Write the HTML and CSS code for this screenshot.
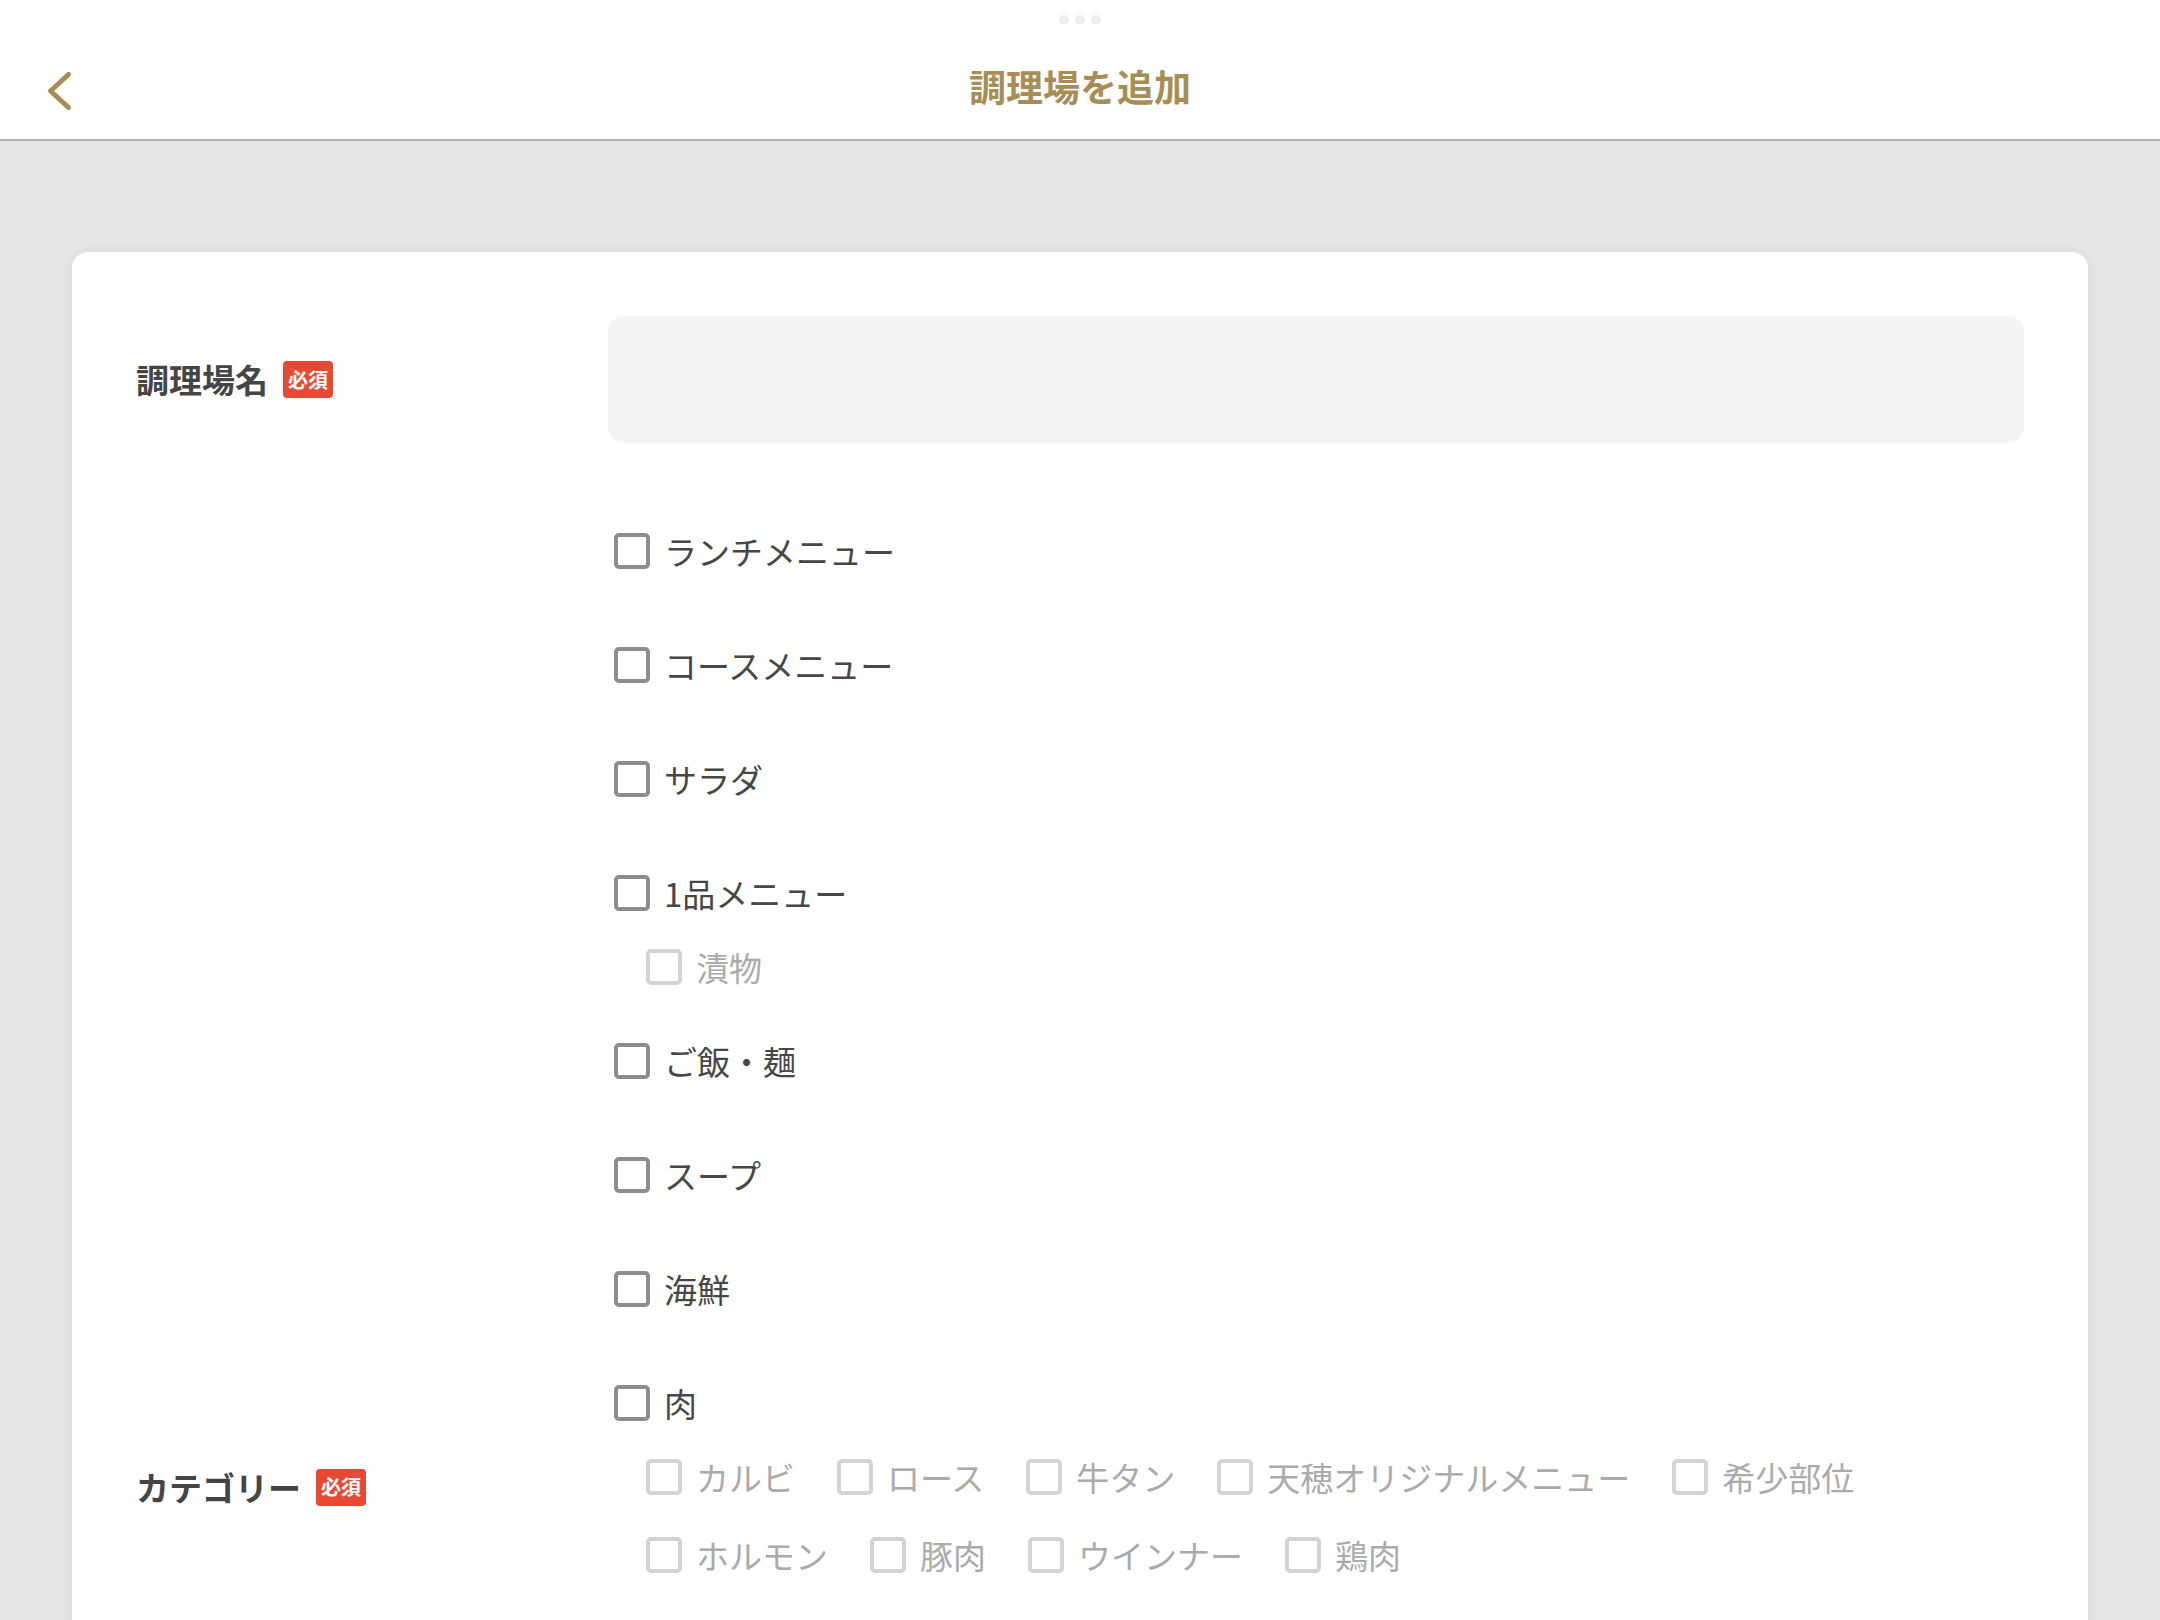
FILE: index.html
```html
<!DOCTYPE html>
<html lang="ja">
<head>
<meta charset="utf-8">
<title>調理場を追加</title>
<link rel="stylesheet" href="styles.css">
</head>
<body>
<div class="app">
  <header class="topbar">
    <div class="handle"><span></span><span></span><span></span></div>
    <div class="navbar">
      <button class="back" aria-label="戻る">
        <svg width="28" height="50" viewBox="0 0 28 50"><polyline points="22.5,11.5 4.5,28 22.5,44.5" fill="none" stroke="currentColor" stroke-width="5" stroke-linecap="round" stroke-linejoin="round"/></svg>
      </button>
      <h1 class="title">調理場を追加</h1>
      <div class="nav-spacer"></div>
    </div>
  </header>
  <main class="content">
    <section class="card">
      <div class="form-row">
        <div class="label"><span class="label-text">調理場名</span><span class="badge">必須</span></div>
        <div class="field"><input class="text-input" type="text"></div>
      </div>
      <div class="form-row category-row">
        <div class="label"><span class="label-text">カテゴリー</span><span class="badge">必須</span></div>
        <ul class="category-list">
          <li class="item"><label class="check"><input type="checkbox"><span>ランチメニュー</span></label></li>
          <li class="item"><label class="check"><input type="checkbox"><span>コースメニュー</span></label></li>
          <li class="item"><label class="check"><input type="checkbox"><span>サラダ</span></label></li>
          <li class="item">
            <label class="check"><input type="checkbox"><span>1品メニュー</span></label>
            <div class="sub-list">
              <label class="check sub"><input type="checkbox"><span>漬物</span></label>
            </div>
          </li>
          <li class="item"><label class="check"><input type="checkbox"><span>ご飯・麺</span></label></li>
          <li class="item"><label class="check"><input type="checkbox"><span>スープ</span></label></li>
          <li class="item"><label class="check"><input type="checkbox"><span>海鮮</span></label></li>
          <li class="item">
            <label class="check"><input type="checkbox"><span>肉</span></label>
            <div class="sub-list">
              <label class="check sub"><input type="checkbox"><span>カルビ</span></label>
              <label class="check sub"><input type="checkbox"><span>ロース</span></label>
              <label class="check sub"><input type="checkbox"><span>牛タン</span></label>
              <label class="check sub"><input type="checkbox"><span>天穂オリジナルメニュー</span></label>
              <label class="check sub"><input type="checkbox"><span>希少部位</span></label>
              <label class="check sub"><input type="checkbox"><span>ホルモン</span></label>
              <label class="check sub"><input type="checkbox"><span>豚肉</span></label>
              <label class="check sub"><input type="checkbox"><span>ウインナー</span></label>
              <label class="check sub"><input type="checkbox"><span>鶏肉</span></label>
            </div>
          </li>
        </ul>
      </div>
    </section>
  </main>
</div>
</body>
</html>
```

FILE: styles.css
```css
html, body {
  margin: 0;
  padding: 0;
  height: 100%;
  overflow: hidden;
}

body {
  font-family: "Noto Sans CJK JP", "Noto Sans", sans-serif;
  color: #444444;
  background: #e6e6e6;
}

.app {
  height: 100vh;
  display: flex;
  flex-direction: column;
}

.topbar {
  background: #ffffff;
  border-bottom: 2px solid #b3b3b3;
  flex: none;
}

.handle {
  height: 36px;
  display: flex;
  justify-content: center;
  gap: 6px;
  padding-top: 15px;
  box-sizing: border-box;
}

.handle span {
  width: 10px;
  height: 10px;
  border-radius: 50%;
  background: #efefef;
}

.navbar {
  height: 103px;
  display: grid;
  grid-template-columns: 1fr auto 1fr;
  align-items: center;
}

.back {
  justify-self: start;
  margin-left: 46px;
  padding: 0;
  border: none;
  background: none;
  color: #a88e55;
  display: flex;
  align-items: center;
}

.title {
  margin: 0;
  font-size: 37px;
  font-weight: 700;
  color: #a88e55;
  line-height: 1;
  margin-top: -2px;
}

.content {
  flex: 1;
  overflow: hidden;
  padding: 111px 72px 0;
}

.card {
  background: #ffffff;
  border-radius: 16px;
  box-shadow: 0 0 14px rgba(0, 0, 0, 0.06);
  padding: 64px;
}

.form-row {
  display: grid;
  grid-template-columns: 472px 1fr;
  align-items: center;
}

.category-row {
  margin-top: 62px;
}

.label {
  display: flex;
  align-items: center;
  gap: 15px;
}

.label-text {
  font-size: 33px;
  font-weight: 700;
  color: #454545;
  line-height: 1;
}

.badge {
  display: inline-flex;
  align-items: center;
  justify-content: center;
  width: 50px;
  height: 37px;
  border-radius: 4px;
  background: #e64a35;
  color: #ffffff;
  font-size: 20px;
  font-weight: 700;
  line-height: 1;
}

.text-input {
  display: block;
  width: 100%;
  height: 127px;
  box-sizing: border-box;
  border: none;
  border-radius: 16px;
  background: #f4f4f4;
  outline: none;
  font: inherit;
}

.category-list {
  list-style: none;
  margin: 0;
  padding: 0 0 888px 6px;
  display: flex;
  flex-direction: column;
  gap: 22px;
}

.item > .check {
  height: 92px;
}

.check {
  display: flex;
  align-items: center;
  gap: 14px;
  font-size: 33px;
  line-height: 1;
  color: #474747;
}

.check input {
  appearance: none;
  -webkit-appearance: none;
  margin: 0;
  width: 36px;
  height: 36px;
  box-sizing: border-box;
  border: 4px solid #8d8d8d;
  border-radius: 5px;
  background: #ffffff;
  flex: none;
}

.sub-list {
  margin-top: 2px;
  padding-left: 32px;
  display: flex;
  flex-wrap: wrap;
  column-gap: 42px;
  row-gap: 26px;
}

.check.sub {
  height: 52px;
  color: #ababab;
}

.check.sub input {
  border-color: #d4d4d4;
}
```
